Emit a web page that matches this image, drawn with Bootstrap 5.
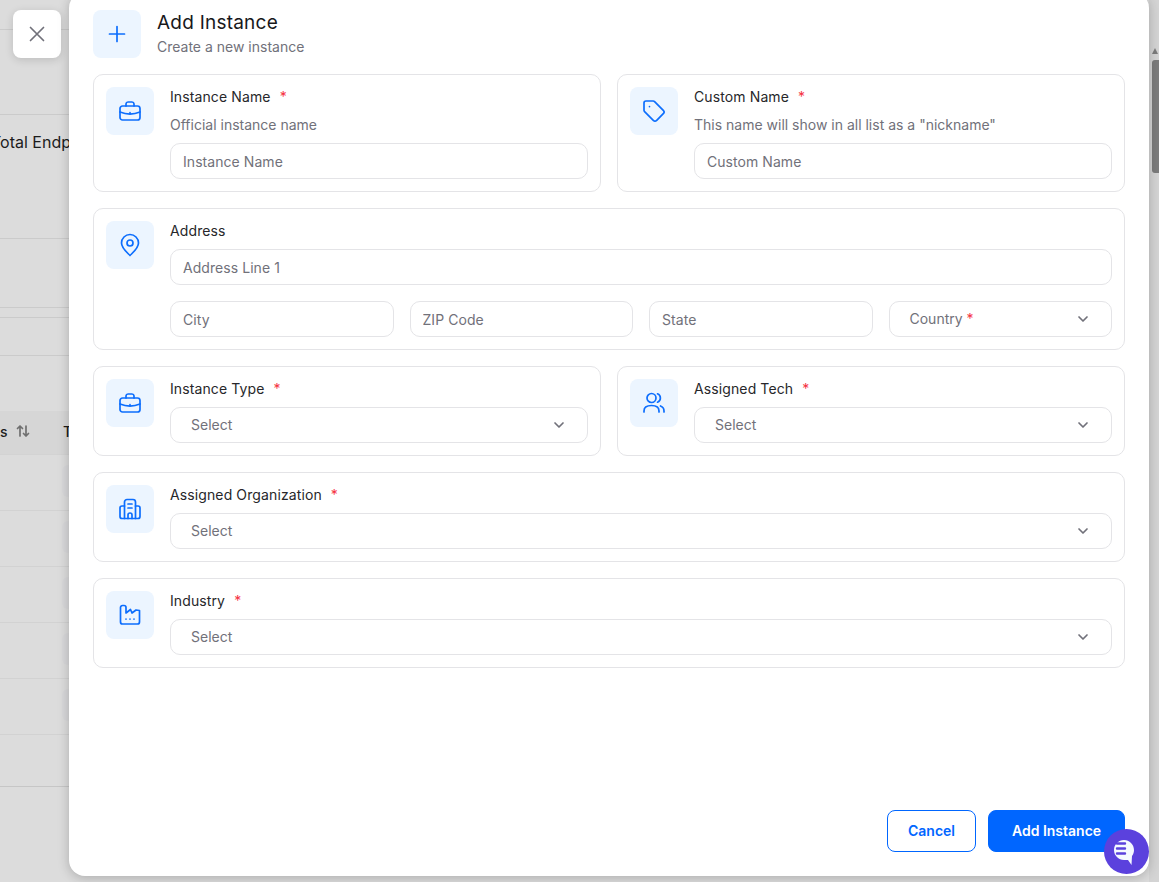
<!DOCTYPE html>
<html lang="en">
<head>
<meta charset="utf-8">
<title>Add Instance</title>
<link rel="stylesheet" href="https://cdn.jsdelivr.net/npm/bootstrap@5.3.0/dist/css/bootstrap.min.css">
<style>
html,body{height:100%;overflow:hidden}
body{background:#dcdcdc;font-family:Inter,"Liberation Sans",sans-serif;color:#27272a}
.bg-page{height:882px;color:#1c1c1c;font-size:16px}
.bg-line{border-bottom:1px solid #cbcbcb}
.bl1{height:30px}
.bl2{height:85px}
.bl3{height:124px;line-height:54px;margin-left:-9px;white-space:nowrap}
.bl4{height:69px}.bl5{height:10px}.bl6{height:38px}
.bl7{height:55px}
.bl-head{height:44px;background:#d6d6d6;font-size:14px;font-weight:500;border-bottom:1px solid #d3d3d3;padding-bottom:3px}
.bl-row{height:56px;border-bottom:1px solid #d2d2d2;position:relative}
.bl-last{height:52px;border-bottom:1px solid #c6c6c6}
.bl-row::after{content:"";position:absolute;left:62px;top:10px;width:12px;height:32px;border-radius:8px;background:#d8d8da}
.head-s{width:63px}
.sbar{position:absolute;top:0;right:0;width:10px;height:882px;background:#d4d4d4}
.sbar-thumb{position:absolute;left:3px;top:60px;width:7px;height:113px;background:#7c7c7c;border-radius:3px 0 0 3px}
.sbar-up{position:absolute;left:3px;top:48px;width:0;height:0;border-left:3.5px solid transparent;border-right:3.5px solid transparent;border-bottom:6px solid #7c7c7c}
.close-tile{position:absolute;left:13px;top:10px;width:48px;height:48px;padding:0;border:0;background:#fff;border-radius:8px;box-shadow:0 2px 8px rgba(0,0,0,.14);color:#71717a}
.panel{position:absolute;left:69px;top:-8px;width:1080px;height:884px;background:#fff;border-radius:16px;box-shadow:0 2px 12px rgba(0,0,0,.22);padding:18px 24px 24px}
.tile{flex:0 0 48px;width:48px;height:48px;background:#ecf5ff;border-radius:8px;color:#0d6efd}
.tile svg{display:block}
.ic{fill:none;stroke:currentColor;stroke-width:1.7;stroke-linecap:round;stroke-linejoin:round}
.sortic{color:#6f6f6f}
.ttl{font-size:19px;line-height:24px;font-weight:400;color:#18181b;margin:1px 0 2px;letter-spacing:.012em}
.sub{font-size:14px;line-height:20px;color:#71717a}
.box{border:1px solid #e4e4e7;border-radius:10px;padding:12px;background:#fff}
.lbl{display:block;font-size:14px;line-height:20px;font-weight:400;color:#27272a;margin:0 0 8px;letter-spacing:.008em}
.req{color:#f5333f;margin-left:5px;font-weight:400}
.hint{font-size:14px;line-height:20px;color:#71717a;margin-bottom:8px}
.form-control.fld{height:36px;font-size:14px;line-height:20px;padding:7px 12px;border-radius:10px;border-color:#e4e4e7;color:#27272a;letter-spacing:.004em}
.form-control.fld::placeholder{color:#71717a;opacity:1}
.pick{height:36px;border:1px solid #e4e4e7;border-radius:10px;padding:0 20px;font-size:14px;color:#71717a;background:#fff}
.pick .req{margin-left:0}
.pick-txt{margin-bottom:2px}
.foot-btn{height:42px;font-size:14px;font-weight:600;border-radius:8px;padding:0 0 1px}
.b-cancel{width:89px;color:#0066ff;border-color:#0066ff}
.b-add{width:137px;background:#0066ff;border-color:#0066ff}
.chat{position:absolute;left:1104px;top:829px;width:45px;height:45px;border-radius:50%;background:#5b41dd;padding:11px 0 0 10px}
.chat svg{display:block}
</style>
</head>
<body>
<div class="bg-page">
  <div class="bg-line bl1"></div>
  <div class="bg-line bl2"></div>
  <div class="bg-line bl3"><span>Total Endpoints</span></div>
  <div class="bg-line bl4"></div>
  <div class="bg-line bl5"></div>
  <div class="bg-line bl6"></div>
  <div class="bl7"></div>
  <div class="bl-head d-flex align-items-center">
    <div class="head-s d-flex align-items-center gap-2">
      <span>s</span>
      <svg width="14" height="14" viewBox="0 0 14 14" class="ic sortic"><path d="M4 12V2M1.500 4.500 4 2l2.500 2.500M10 2v10M7.500 9.500 10 12l2.500-2.500"/></svg>
    </div>
    <span>T</span>
  </div>
  <div class="bl-row"></div>
  <div class="bl-row"></div>
  <div class="bl-row"></div>
  <div class="bl-row"></div>
  <div class="bl-row"></div>
  <div class="bl-last"></div>
</div>

<div class="sbar"><div class="sbar-up"></div><div class="sbar-thumb"></div></div>

<button type="button" class="close-tile d-flex align-items-center justify-content-center" aria-label="Close">
  <svg width="24" height="24" viewBox="0 0 24 24" class="ic"><path d="M5.500 5.500l13 13M18.500 5.500l-13 13"/></svg>
</button>

<section class="panel d-flex flex-column">
  <header class="d-flex gap-3 mb-3">
    <div class="tile d-flex align-items-center justify-content-center">
      <svg width="24" height="24" viewBox="0 0 24 24" class="ic"><path d="M12 4.500v15M4.500 12h15"/></svg>
    </div>
    <div>
      <h1 class="ttl">Add Instance</h1>
      <div class="sub">Create a new instance</div>
    </div>
  </header>

  <div class="d-flex flex-column gap-3">
    <div class="row g-3">
      <div class="col-6">
        <div class="box d-flex gap-3">
          <div class="tile d-flex align-items-center justify-content-center">
            <svg width="24" height="24" viewBox="0 0 24 24" class="ic"><rect x="2" y="7" width="20" height="14" rx="2.500"/><path d="M8 7V4.800A2 2 0 0 1 10 3h4a2 2 0 0 1 2 1.800V7M2 13c6 2.500 14 2.500 20 0M12 13.500v.1"/></svg>
          </div>
          <div class="flex-grow-1">
            <label class="lbl" for="f1">Instance Name <span class="req">*</span></label>
            <div class="hint">Official instance name</div>
            <input id="f1" class="form-control fld" placeholder="Instance Name">
          </div>
        </div>
      </div>
      <div class="col-6">
        <div class="box d-flex gap-3">
          <div class="tile d-flex align-items-center justify-content-center">
            <svg width="24" height="24" viewBox="0 0 24 24" class="ic"><path d="M12.586 2.586A2 2 0 0 0 11.172 2H4a2 2 0 0 0-2 2v7.172a2 2 0 0 0 .586 1.414l8.704 8.704a2.426 2.426 0 0 0 3.420 0l6.580-6.580a2.426 2.426 0 0 0 0-3.420z"/><path d="M7.500 7.500v.1"/></svg>
          </div>
          <div class="flex-grow-1">
            <label class="lbl" for="f2">Custom Name <span class="req">*</span></label>
            <div class="hint">This name will show in all list as a "nickname"</div>
            <input id="f2" class="form-control fld" placeholder="Custom Name">
          </div>
        </div>
      </div>
    </div>

    <div class="box d-flex gap-3">
      <div class="tile d-flex align-items-center justify-content-center">
        <svg width="24" height="24" viewBox="0 0 24 24" class="ic"><path d="M12 1.500a8.500 8.500 0 0 0-8.500 8.500c0 5 5 9 8.500 12.500 3.500-3.500 8.500-7.500 8.500-12.500A8.500 8.500 0 0 0 12 1.500z"/><circle cx="12" cy="10" r="3"/></svg>
      </div>
      <div class="flex-grow-1">
        <label class="lbl" for="f3">Address</label>
        <input id="f3" class="form-control fld mb-3" placeholder="Address Line 1">
        <div class="row g-3">
          <div class="col-3"><input class="form-control fld" placeholder="City" aria-label="City"></div>
          <div class="col-3"><input class="form-control fld" placeholder="ZIP Code" aria-label="ZIP Code"></div>
          <div class="col-3"><input class="form-control fld" placeholder="State" aria-label="State"></div>
          <div class="col-3">
            <div class="pick d-flex align-items-center justify-content-between">
              <span class="pick-txt">Country <span class="req">*</span></span>
              <svg class="ic" width="16" height="16" viewBox="0 0 16 16"><path d="M4 6l4 4 4-4"/></svg>
            </div>
          </div>
        </div>
      </div>
    </div>

    <div class="row g-3">
      <div class="col-6">
        <div class="box d-flex gap-3">
          <div class="tile d-flex align-items-center justify-content-center">
            <svg width="24" height="24" viewBox="0 0 24 24" class="ic"><rect x="2" y="7" width="20" height="14" rx="2.500"/><path d="M8 7V4.800A2 2 0 0 1 10 3h4a2 2 0 0 1 2 1.800V7M2 13c6 2.500 14 2.500 20 0M12 13.500v.1"/></svg>
          </div>
          <div class="flex-grow-1">
            <div class="lbl">Instance Type <span class="req">*</span></div>
            <div class="pick d-flex align-items-center justify-content-between">
              <span class="pick-txt">Select</span>
              <svg class="ic" width="16" height="16" viewBox="0 0 16 16"><path d="M4 6l4 4 4-4"/></svg>
            </div>
          </div>
        </div>
      </div>
      <div class="col-6">
        <div class="box d-flex gap-3">
          <div class="tile d-flex align-items-center justify-content-center">
            <svg width="24" height="24" viewBox="0 0 24 24" class="ic"><circle cx="9.500" cy="7" r="4.500"/><path d="M2 21v-1c0-3.500 3-5.500 7.500-5.500S17 16.500 17 20v1M15.500 2.800a4.500 4.500 0 0 1 0 8.400M22 21v-1c0-2.500-1.300-4.200-3.500-5"/></svg>
          </div>
          <div class="flex-grow-1">
            <div class="lbl">Assigned Tech <span class="req">*</span></div>
            <div class="pick d-flex align-items-center justify-content-between">
              <span class="pick-txt">Select</span>
              <svg class="ic" width="16" height="16" viewBox="0 0 16 16"><path d="M4 6l4 4 4-4"/></svg>
            </div>
          </div>
        </div>
      </div>
    </div>

    <div class="box d-flex gap-3">
      <div class="tile d-flex align-items-center justify-content-center">
        <svg width="24" height="24" viewBox="0 0 24 24" class="ic"><path d="M6.500 21.500V5A2.500 2.500 0 0 1 9 2.500h6A2.500 2.500 0 0 1 17.500 5v16.500"/><path d="M6.500 9H4A2 2 0 0 0 2 11v8.500a2 2 0 0 0 2 2h16a2 2 0 0 0 2-2V11a2 2 0 0 0-2-2h-2.500"/><path d="M10 21.500V18a2 2 0 0 1 4 0v3.500M10 7h4M10 11h4"/></svg>
      </div>
      <div class="flex-grow-1">
        <div class="lbl">Assigned Organization <span class="req">*</span></div>
        <div class="pick d-flex align-items-center justify-content-between">
          <span class="pick-txt">Select</span>
          <svg class="ic" width="16" height="16" viewBox="0 0 16 16"><path d="M4 6l4 4 4-4"/></svg>
        </div>
      </div>
    </div>

    <div class="box d-flex gap-3">
      <div class="tile d-flex align-items-center justify-content-center">
        <svg width="24" height="24" viewBox="0 0 24 24" class="ic"><path d="M2.500 4.500a2 2 0 0 1 2-2H6a2 2 0 0 1 2 2V10l4.500-3.500 1.500 3.500 4-3 3.500.5V19a2 2 0 0 1-2 2H4.500a2 2 0 0 1-2-2z"/><path d="M8 16v.1M12 16v.1M16 16v.1"/></svg>
      </div>
      <div class="flex-grow-1">
        <div class="lbl">Industry <span class="req">*</span></div>
        <div class="pick d-flex align-items-center justify-content-between">
          <span class="pick-txt">Select</span>
          <svg class="ic" width="16" height="16" viewBox="0 0 16 16"><path d="M4 6l4 4 4-4"/></svg>
        </div>
      </div>
    </div>
  </div>

  <footer class="d-flex justify-content-end gap-2 mt-auto">
    <button type="button" class="btn btn-outline-primary foot-btn b-cancel me-1">Cancel</button>
    <button type="button" class="btn btn-primary foot-btn b-add">Add Instance</button>
  </footer>
</section>

<div class="chat">
  <svg width="22" height="27" viewBox="0 0 22 27">
    <path d="M10 0C4.500 0 0 4.500 0 10s4.500 10 10 10h4l3.500 5 .5-9c1.300-1.700 2-3.700 2-6C20 4.500 15.500 0 10 0z" fill="#f5f9ff"/>
    <path d="M3 3.500h8M3 8.500h8M3 13.500h8" stroke="#5b41dd" stroke-width="2.400" stroke-linecap="round" fill="none"/>
  </svg>
</div>

<script src="https://cdn.jsdelivr.net/npm/bootstrap@5.3.0/dist/js/bootstrap.bundle.min.js"></script>
</body>
</html>
